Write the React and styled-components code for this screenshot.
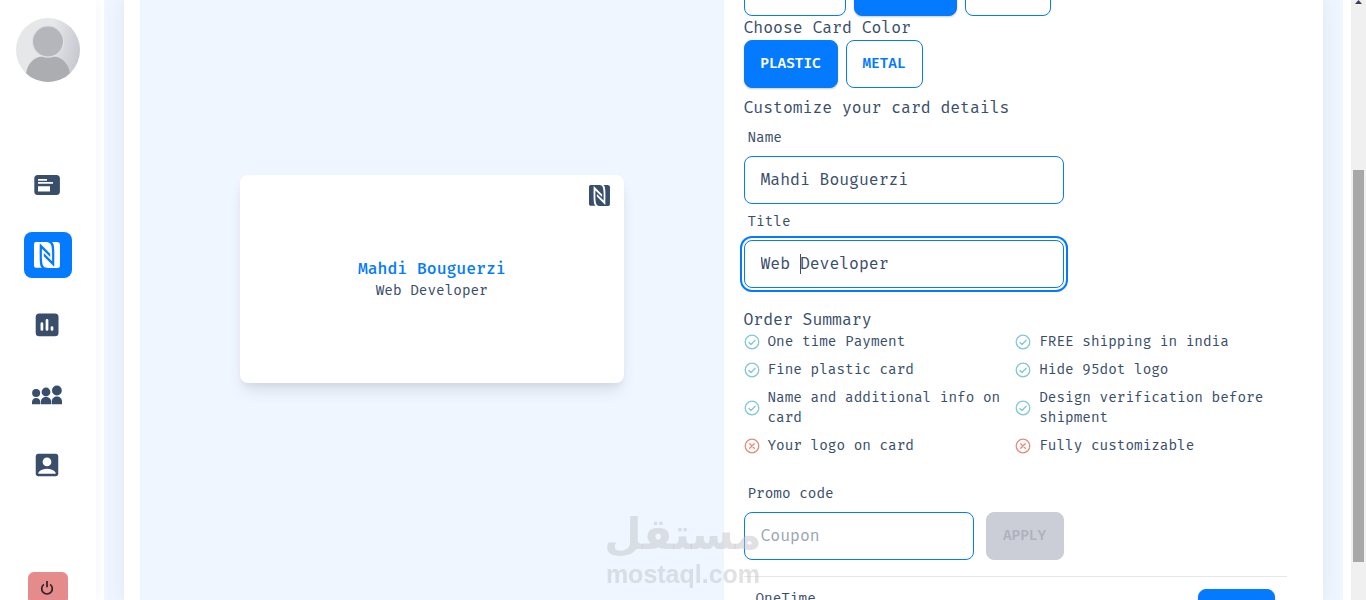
import React, { useState } from 'react';
import styled, { createGlobalStyle, ThemeProvider } from 'styled-components';
import { MdAccountBox } from 'react-icons/md';
import { SiNfc } from 'react-icons/si';

const theme = {
  colors: {
    primary: '#047aff',
    text: '#394e6a',
    base: '#ffffff',
    tint: '#eff6ff',
    success: '#80c8d6',
    error: '#e58b7b',
    danger: '#e58b8b',
    disabled: '#cbced7',
    disabledText: '#aeb2bc',
    placeholder: '#9ca6b4',
    line: '#e5e7eb',
  },
  mono: '"Fira Code", "DejaVu Sans Mono", monospace',
};

const GlobalStyle = createGlobalStyle`
  *, *::before, *::after {
    box-sizing: border-box;
  }

  body {
    margin: 0;
    overflow: hidden;
    background: #ffffff;
  }

  button, input {
    font: inherit;
    color: inherit;
  }
`;

const Page = styled.div`
  display: flex;
  height: 100vh;
  overflow: hidden;
  font-family: ${({ theme }) => theme.mono};
  font-size: 16px;
  line-height: 24px;
  color: ${({ theme }) => theme.colors.text};
`;

const Sidebar = styled.aside`
  flex: none;
  width: 96px;
  padding-top: 18px;
  display: flex;
  flex-direction: column;
  align-items: center;
  background: ${({ theme }) => theme.colors.base};
  box-shadow: 0 0 12px rgba(0, 0, 0, 0.05);
`;

const Nav = styled.nav`
  display: flex;
  flex-direction: column;
  gap: 24px;
  margin: 80px 0 84px;
`;

const NavLink = styled.a`
  display: flex;
  align-items: center;
  width: 48px;
  height: 46px;
  padding: 8px;
  border-radius: 8px;
  color: ${({ theme, $active }) => $active ? theme.colors.base : theme.colors.text};
  background: ${({ theme, $active }) => $active ? theme.colors.primary : 'transparent'};
`;

const LogoutButton = styled.button`
  flex: none;
  width: 40px;
  height: 32px;
  padding: 0 0 0 11px;
  display: flex;
  align-items: center;
  border: none;
  border-radius: 6px;
  background: ${({ theme }) => theme.colors.danger};
  color: #2f2124;
`;

const Main = styled.main`
  flex: 1;
  min-width: 0;
  margin: 0 8px;
  padding: 0 20px;
  display: flex;
  overflow: hidden;
  background: ${({ theme }) => theme.colors.tint};
`;

const Panel = styled.section`
  flex: 1;
  display: grid;
  grid-template-columns: 1fr 1fr;
  padding: 0 16px;
  background: ${({ theme }) => theme.colors.base};
  box-shadow: 0 0 20px rgba(40, 40, 90, 0.08);
`;

const Preview = styled.div`
  display: flex;
  justify-content: center;
  align-items: flex-start;
  padding-top: 175px;
  background: ${({ theme }) => theme.colors.tint};
`;

const Card = styled.div`
  width: 384px;
  height: 208px;
  padding: 10px 14px;
  display: grid;
  grid-template-rows: 21px 1fr 21px;
  border-radius: 8px;
  background: ${({ theme }) => theme.colors.base};
  box-shadow: 0 10px 15px -3px rgba(0, 0, 0, 0.1), 0 4px 6px -2px rgba(0, 0, 0, 0.05);

  svg {
    justify-self: end;
  }
`;

const CardText = styled.div`
  align-self: center;
  text-align: center;
`;

const CardName = styled.div`
  font-weight: 500;
  color: ${({ theme }) => theme.colors.primary};
`;

const CardTitle = styled.div`
  font-size: 14px;
  line-height: 20px;
`;

const Details = styled.div`
  padding: 0 20px;
`;

const ButtonRow = styled.div`
  display: flex;
  align-items: flex-end;
  gap: 8px;
  height: ${({ $cut }) => $cut ? '16px' : '48px'};
`;

const Button = styled.button`
  flex: none;
  width: ${({ $width }) => $width}px;
  height: 48px;
  padding: 0;
  border: 1px solid ${({ theme }) => theme.colors.primary};
  border-radius: 8px;
  font-size: 14px;
  line-height: 14px;
  font-weight: 600;
  text-transform: uppercase;
  color: ${({ theme, $filled }) => $filled ? theme.colors.base : theme.colors.primary};
  background: ${({ theme, $filled }) => $filled ? theme.colors.primary : theme.colors.base};
  box-shadow: ${({ $filled }) => $filled ? '0 1px 2px rgba(0, 0, 0, 0.2)' : 'none'};

  &:disabled {
    border-color: ${({ theme }) => theme.colors.disabled};
    background: ${({ theme }) => theme.colors.disabled};
    color: ${({ theme }) => theme.colors.disabledText};
  }
`;

const Heading = styled.h2`
  margin: ${({ $top }) => $top || 0}px 0 0;
  font-size: 16px;
  line-height: 24px;
  font-weight: 400;
`;

const Label = styled.label`
  display: block;
  padding: 8px 4px;
  font-size: 14px;
  line-height: 20px;
`;

const Field = styled.div`
  position: relative;
  width: ${({ $width }) => $width || 320}px;
`;

const Input = styled.input`
  display: block;
  width: 100%;
  height: 48px;
  padding: 0 16px;
  border: 1px solid ${({ theme }) => theme.colors.primary};
  border-radius: 8px;
  background: ${({ theme }) => theme.colors.base};
  caret-color: transparent;

  &:focus {
    outline: 2px solid ${({ theme }) => theme.colors.primary};
    outline-offset: 2px;
  }

  &::placeholder {
    color: ${({ theme }) => theme.colors.placeholder};
    opacity: 1;
  }
`;

const Caret = styled.span`
  position: absolute;
  top: 14px;
  left: calc(17px + 4ch);
  width: 1px;
  height: 20px;
  background: ${({ theme }) => theme.colors.text};
`;

const Features = styled.ul`
  display: grid;
  grid-template-columns: 1fr 1fr;
  row-gap: 8px;
  margin: 0 0 20px;
  padding: 0;
  list-style: none;
  font-size: 14px;
  line-height: 20px;
`;

const Feature = styled.li`
  display: flex;
  align-items: center;
  gap: 8px;

  svg {
    flex: none;
    color: ${({ theme, $included }) => $included ? theme.colors.success : theme.colors.error};
  }
`;

const PromoRow = styled.div`
  display: flex;
  gap: 12px;
`;

const Total = styled.div`
  display: flex;
  justify-content: space-between;
  margin-top: 16px;
  padding: 12px;
  border-top: 1px solid ${({ theme }) => theme.colors.line};
  font-size: 14px;
  line-height: 20px;
`;

const ScrollTrack = styled.div`
  flex: none;
  width: 15px;
  padding: 0 2px;
  display: flex;
  flex-direction: column;
  background: #f0f0f0;

  svg {
    align-self: center;
  }
`;

const ScrollThumb = styled.div`
  height: 392px;
  margin-top: 166px;
  background: #a8a8a8;
`;

const Watermark = styled.div`
  position: fixed;
  left: 603px;
  bottom: 12px;
  width: 160px;
  display: flex;
  flex-direction: column;
  align-items: center;
  pointer-events: none;
  font-weight: 700;
  color: rgba(196, 196, 202, 0.5);
`;

const WatermarkArabic = styled.span`
  font-family: "DejaVu Sans", sans-serif;
  font-size: 43px;
  line-height: 52px;
`;

const WatermarkLatin = styled.span`
  font-family: "Liberation Sans", sans-serif;
  font-size: 25px;
  line-height: 28px;
`;

const Avatar = () => (
  <svg width="64" height="64" viewBox="0 0 64 64" style={{ flex: 'none' }}>
    <defs>
      <linearGradient id="avatarBg" x1="0" y1="0.4" x2="1" y2="0.6">
        <stop offset="0.5" stopColor="#e6e7e8" />
        <stop offset="1" stopColor="#c6c8d1" />
      </linearGradient>
      <clipPath id="avatarClip"><circle cx="32" cy="32" r="32" /></clipPath>
    </defs>
    <g clipPath="url(#avatarClip)">
      <rect width="64" height="64" fill="url(#avatarBg)" />
      <path d="M10 56C11 46 18 39 26 38.500H38C46 39 53 46 54 56V64H10Z" fill="#acadb0" />
      <circle cx="32" cy="23.500" r="16.300" fill="#dfe0e3" />
      <circle cx="32" cy="23.500" r="15" fill="#b5b6bb" />
    </g>
  </svg>
);

const CardsIcon = () => (
  <svg width="30" height="30" viewBox="0 0 30 30">
    <rect x="2.3" y="5" width="25.6" height="20" rx="3.5" fill="currentColor" />
    <path d="M6 9h9v1.7H6zM6 12.1h15v1.7H6zM6 16.2h12v5.2H6z" fill="#fff" />
  </svg>
);

const NfcIcon = () => (
  <svg width="30" height="30" viewBox="0 0 30 30">
    <SiNfc x="2" y="2" size={26} />
  </svg>
);

const StatsIcon = () => (
  <svg width="30" height="30" viewBox="0 0 30 30">
    <rect x="3.7" y="3.5" width="22.8" height="22.8" rx="3.5" fill="currentColor" />
    <path d="M9.9 13.7v5.800M15 10.3v9.200M20 17.500v2" stroke="#fff" strokeWidth="2.700" strokeLinecap="round" />
  </svg>
);

const TeamIcon = () => (
  <svg width="30" height="30" viewBox="0 0 30 30" fill="currentColor">
    <circle cx="4.1" cy="13.1" r="4" />
    <circle cx="14" cy="12" r="4.4" />
    <circle cx="24.9" cy="10.5" r="4.9" />
    <path d="M0 24.3v-2.2C0 19.6 1.9 18 4.15 18S8.3 19.6 8.3 22.1v2.2z" />
    <path d="M8.9 24.3v-2.5C8.9 18.9 11.2 17 14 17s5.2 1.9 5.2 4.8v2.5z" />
    <path d="M19.8 24.3v-2.6c0-3.1 2.3-5.1 5.1-5.1s5.1 2 5.1 5.1v2.6z" />
  </svg>
);

const PowerIcon = () => (
  <svg width="16" height="16" viewBox="0 0 16 16" fill="none" stroke="currentColor" strokeWidth="1.7">
    <path d="M4.9 4.4A5.3 5.3 0 1 0 11.1 4.4M8 1v6.300" />
  </svg>
);

const StatusIcon = ({ ok }) => (
  <svg width="16" height="16" viewBox="0 0 16 16" fill="none" stroke="currentColor" strokeWidth="1.3" strokeLinecap="round" strokeLinejoin="round">
    <circle cx="8" cy="8" r="6.800" />
    <path d={ok ? 'M4.9 8.500L7 10.500L11.100 6.200' : 'M5.700 5.700L10.300 10.300M10.300 5.700L5.700 10.300'} />
  </svg>
);

const navItems = [
  { label: 'Cards', icon: <CardsIcon /> },
  { label: 'NFC', icon: <NfcIcon />, active: true },
  { label: 'Statistics', icon: <StatsIcon /> },
  { label: 'Team', icon: <TeamIcon /> },
  { label: 'Account', icon: <MdAccountBox size={30} /> },
];

const features = [
  { text: 'One time Payment', included: true },
  { text: 'FREE shipping in india', included: true },
  { text: 'Fine plastic card', included: true },
  { text: 'Hide 95dot logo', included: true },
  { text: 'Name and additional info on card', included: true },
  { text: 'Design verification before shipment', included: true },
  { text: 'Your logo on card', included: false },
  { text: 'Fully customizable', included: false },
];

const App = () => {
  const [name, setName] = useState('Mahdi Bouguerzi');
  const [title, setTitle] = useState('Web Developer');
  const [coupon, setCoupon] = useState('');
  const [material, setMaterial] = useState('Plastic');

  return (
    <ThemeProvider theme={theme}>
      <GlobalStyle />
      <Page>
        <Sidebar>
          <Avatar />
          <Nav>
            {navItems.map(item => (
              <NavLink key={item.label} href="#" aria-label={item.label} $active={item.active}>
                {item.icon}
              </NavLink>
            ))}
          </Nav>
          <LogoutButton aria-label="Log out"><PowerIcon /></LogoutButton>
        </Sidebar>

        <Main>
          <Panel>
            <Preview>
              <Card>
                <SiNfc size={21} />
                <CardText>
                  <CardName>{name}</CardName>
                  <CardTitle>{title}</CardTitle>
                </CardText>
              </Card>
            </Preview>

            <Details>
              <ButtonRow $cut>
                <Button $width={102} aria-label="First card type" />
                <Button $width={103} $filled aria-label="Second card type" />
                <Button $width={86} aria-label="Third card type" />
              </ButtonRow>

              <Heading>Choose Card Color</Heading>
              <ButtonRow>
                <Button $width={94} $filled={material === 'Plastic'} onClick={() => setMaterial('Plastic')}>Plastic</Button>
                <Button $width={77} $filled={material === 'Metal'} onClick={() => setMaterial('Metal')}>Metal</Button>
              </ButtonRow>

              <Heading $top={8}>Customize your card details</Heading>
              <Label htmlFor="name">Name</Label>
              <Field>
                <Input id="name" value={name} onChange={e => setName(e.target.value)} />
              </Field>
              <Label htmlFor="title">Title</Label>
              <Field>
                <Input id="title" value={title} onChange={e => setTitle(e.target.value)} autoFocus />
                <Caret />
              </Field>

              <Heading $top={20}>Order Summary</Heading>
              <Features>
                {features.map(({ text, included }) => (
                  <Feature key={text} $included={included}>
                    <StatusIcon ok={included} />
                    {text}
                  </Feature>
                ))}
              </Features>

              <Label htmlFor="coupon">Promo code</Label>
              <PromoRow>
                <Field $width={230}>
                  <Input id="coupon" placeholder="Coupon" value={coupon} onChange={e => setCoupon(e.target.value)} />
                </Field>
                <Button $width={78} disabled={!coupon}>Apply</Button>
              </PromoRow>

              <Total>
                <span>OneTime</span>
                <Button $width={77} $filled aria-label="Order" />
              </Total>
            </Details>
          </Panel>
        </Main>

        <ScrollTrack>
          <svg width="7" height="4" viewBox="0 0 7 4"><path d="M3.5 0L7 4H0z" fill="#3b3f5c" /></svg>
          <ScrollThumb />
        </ScrollTrack>

        <Watermark>
          <WatermarkArabic lang="ar">مستقل</WatermarkArabic>
          <WatermarkLatin>mostaql.com</WatermarkLatin>
        </Watermark>
      </Page>
    </ThemeProvider>
  );
};

export default App;
